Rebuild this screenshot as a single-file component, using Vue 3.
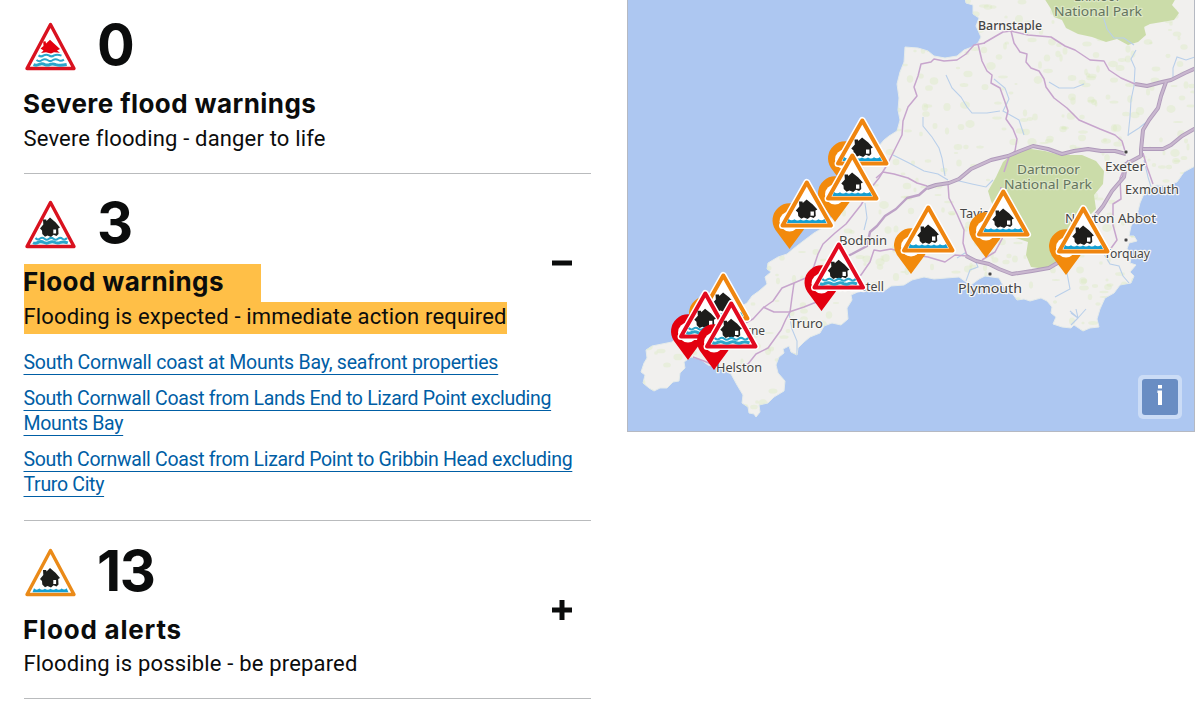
<script setup>
const sections = [
  { id: 'severe', count: '0', title: 'Severe flood warnings', text: 'Severe flooding - danger to life', icon: 'severe', toggle: '', links: [] },
  {
    id: 'warning', count: '3', title: 'Flood warnings', text: 'Flooding is expected - immediate action required', icon: 'warning', toggle: 'minus', marked: true,
    links: [
      ['South Cornwall coast at Mounts Bay, seafront properties'],
      ['South Cornwall Coast from Lands End to Lizard Point excluding', 'Mounts Bay'],
      ['South Cornwall Coast from Lizard Point to Gribbin Head excluding', 'Truro City'],
    ],
  },
  { id: 'alert', count: '13', title: 'Flood alerts', text: 'Flooding is possible - be prepared', icon: 'alert', toggle: 'plus', links: [] },
]

const land =
  'M965 -2 L966 3 973 5 973 14 979 18 976 26 981 37 978 43 972 47 964 50 957 56 945 58 934 56 928 51 918 48 905 47 904 62 900 72 897 84 899 98 898 110 900 120 897 131 889 136 884 140 872 154 860 172 850 186 842 202 833 216 826 226 814 233 802 242 793 249 787 254 778 257 768 263 767 269 771 272 765 277 767 284 759 291 752 296 747 303 737 309 727 318 712 324 704 332 694 334 680 333 672 342 662 344 652 346 646 350 647 358 644 363 641 372 645 375 643 383 649 388 654 391 660 388 667 388 673 382 679 381 680 373 685 368 684 362 691 357 700 359 708 365 720 368 731 374 737 385 743 395 742 403 748 407 749 413 754 414 756 417 760 412 759 405 768 403 774 397 784 391 785 381 778 373 776 365 779 357 784 353 783 349 789 346 791 352 797 355 798 348 804 342 810 337 820 333 824 326 832 323 841 325 848 319 847 308 852 300 851 295 860 291 872 291 884 291 891 286 904 285 912 280 924 277 934 279 946 278 959 277 966 282 971 285 979 279 985 276 999 278 1004 287 1012 293 1017 300 1024 299 1030 301 1041 298 1047 301 1052 307 1051 313 1056 317 1053 324 1062 327 1071 328 1074 325 1083 331 1090 328 1099 327 1097 319 1100 309 1105 298 1114 293 1120 285 1131 283 1134 276 1130 272 1136 265 1130 263 1132 254 1127 249 1129 243 1137 241 1134 236 1129 236 1131 226 1137 215 1140 203 1143 196 1150 188 1157 185 1166 186 1177 182 1184 172 1195 166 L1196 -2Z'

const parks = [
  'M1044 -2 L1051 9 1054 17 1062 20 1066 28 1078 34 1092 37 1106 42 1117 39 1128 45 1138 42 1146 35 1144 27 1150 24 1162 22 1174 20 1179 13 1172 5 1176 -2Z',
  'M1003 162 L1012 154 1024 148 1045 151 1060 155 1082 155 1096 161 1104 171 1103 184 1094 195 1096 209 1086 219 1088 233 1074 248 1064 263 1046 269 1031 267 1026 255 1028 242 1010 236 998 217 991 201 988 191 996 177Z',
]

const roads = [
  'M985 43 L974 45 966 54 957 60 944 61 934 59 931 62 921 64 918 76 914 87 917 96 908 107 903 121 902 135 895 149 887 165 879 178 871 188 861 205 846 224 835 233 823 244 818 254 814 266 811 273',
  'M978 44 L982 61 987 71 992 75 991 83 1000 88 1005 102 1008 111 1006 119 1013 129 1017 139 1015 151 1009 157 1004 172',
  'M984 43 L996 36 1003 32 1011 31 1028 35 1051 37 1065 46 1075 50 1090 60 1104 61 1109 70 1121 78 1135 84',
  'M1011 31 L1014 43 1020 52 1027 54 1026 62 1031 68 1039 71 1044 79 1046 87 1054 98 1067 108 1079 120 1100 129 1115 135 1122 141 1125 151',
  'M876 178 L883 172 894 174 908 178 917 183 927 186',
  'M948 184 L949 198 957 214 964 230 963 243 967 256',
  'M967 256 L955 255 945 262 928 257 909 254 891 249 880 251 874 250 870 262 861 275 846 282',
  'M838 271 L824 275 808 277 794 283 782 288 773 301 763 308 753 319 742 325',
  'M794 283 L792 297 790 312 786 319 781 330 768 348 756 354 748 364 736 369 718 367 704 361 693 357',
  'M763 307 L774 312 789 312 804 307 814 303 827 299',
  'M1128 160 L1120 178 1121 199 1113 204 1113 225 1117 240 1109 251',
  'M1143 153 L1147 167 1153 184',
  'M982 260 L995 252 1002 239 1007 221 999 207 1001 187',
]

const thickRoads = [
  'M1135 84 L1147 86 1162 82 1171 80 1185 73 1196 68',
  'M1166 82 L1161 96 1158 108 1149 120 1143 130 1141 150 1141 157',
  'M1143 149 L1163 149 1171 145 1182 136 1196 128',
  'M1126 154 L1115 151 1101 151 1088 149 1074 151 1062 154 1048 149 1033 146 1020 151 1008 156 991 160 971 169 959 179 949 183 936 185 927 188',
  'M966 256 L976 261 989 264 999 269 1012 274 1032 271 1049 268 1064 259 1075 242 1090 222 1103 206 1112 191 1124 177 1126 164 1141 156',
]

const midRoads = [
  'M927 188 L919 195 907 198 896 209 885 216 877 226 870 232 867 246 852 254 838 261',
]

const rivers = [
  'M946 75 L952 88 961 97 967 107 972 113 987 113 1000 111',
  'M923 117 L923 126 932 137 939 148 942 158 945 176',
  'M1136 50 L1131 59 1135 68 1134 86 1131 100 1130 117 1128 136',
  'M1103 16 L1107 29 1114 38 1124 38 1134 45',
  'M1084 84 L1074 88 1059 88 1049 82',
  'M1128 135 L1139 128 1149 120',
  'M955 180 L972 184 986 187 993 180',
  'M994 79 L1005 88 1009 99 1003 111 1019 120 1024 135',
  'M893 155 L909 163 924 171 938 174 948 180',
  'M1077 234 L1067 254 1067 273 1070 289 1055 297',
  'M865 203 L867 218 864 230',
  'M1104 254 L1110 264 1119 266 1123 276 1129 283',
  'M966 281 L970 270 978 267 975 260 965 253 957 258',
  'M1071 325 L1078 318 1076 309 M1078 318 L1086 309 M1071 313 L1078 318 1070 311',
  'M1144 160 L1148 177 1151 187',
  'M797 355 L797 341 792 329 789 313',
  'M1195 57 L1186 60 1177 57 1173 68 1173 77',
]

let seed = 7
const rand = () => (seed = (seed * 16807) % 2147483647) / 2147483647
const patches = Array.from({ length: 900 }, () => ({
  x: Math.round(640 + rand() * 556),
  y: Math.round(rand() * 420),
  rx: 1.5 + rand() * 3.5,
  ry: 1 + rand() * 3,
}))

const labels = [
  { t: 'Barnstaple', x: 978, y: 30, w: 64, kind: 'bold' },
  { t: 'Exmoor', x: 1074, y: 1, w: 47, kind: 'park' },
  { t: 'National Park', x: 1054, y: 16, w: 88, kind: 'park' },
  { t: 'Dartmoor', x: 1017, y: 174, w: 63, kind: 'park' },
  { t: 'National Park', x: 1004, y: 189, w: 88, kind: 'park' },
  { t: 'Exeter', x: 1105, y: 171, w: 40 },
  { t: 'Exmouth', x: 1125, y: 194, w: 54 },
  { t: 'Newton Abbot', x: 1065, y: 223, w: 91 },
  { t: 'Torquay', x: 1104, y: 258, w: 46 },
  { t: 'Plymouth', x: 958, y: 293, w: 64 },
  { t: 'Tavistock', x: 960, y: 218, w: 54 },
  { t: 'Bodmin', x: 839, y: 245, w: 48 },
  { t: 'St Austell', x: 830, y: 291, w: 54 },
  { t: 'Camborne', x: 706, y: 335, w: 59 },
  { t: 'Truro', x: 790, y: 328, w: 33 },
  { t: 'Helston', x: 716, y: 372, w: 46 },
]

const towns = [[1126, 152], [1126, 240], [990, 274]]

const markers = [
  { x: 845, y: 187, kind: 'alert' },
  { x: 835, y: 222, kind: 'alert' },
  { x: 789.5, y: 249, kind: 'alert' },
  { x: 986, y: 258, kind: 'alert' },
  { x: 911, y: 274, kind: 'alert' },
  { x: 1066, y: 275, kind: 'alert' },
  { x: 821.5, y: 311, kind: 'warning' },
  { x: 706, y: 342, kind: 'alert' },
  { x: 688, y: 360, kind: 'warning' },
  { x: 714, y: 370, kind: 'warning' },
]
</script>

<template>
  <div class="page">
    <svg class="defs" width="0" height="0" aria-hidden="true">
      <defs>
        <path id="house" d="M26 15.5 L30 19 31.5 20.3 36 25.5 34.2 26.5 34.5 32 32.5 34 29.5 32.8 27 35 23.5 33.5 21 34.7 18.3 32 18 28.5 16 26.5 19.3 22.5 19 17.5 22.2 17.5 22.5 19Z" />
        <path id="wave" d="M0 0 q2.2 2.6 4.6 .5 q2.2 -1.6 4.4 .3 q2.2 1.9 4.5 0 q2.2 -1.8 4.5 0 q2.2 1.9 4.5 0 q2.2 -1.8 4.5 0 q2.2 1.9 4.5 -.8" />
        <symbol id="severe" viewBox="0 0 53 49">
          <path class="tri red-line" d="M26.5 2.5 L50 46.5 H3Z" />
          <path class="red-fill" d="M26 17.8 L30 21.5 36 27 33 28.5 36 30.8 30 30.2 27 31.5 22 30.2 17 31 19.5 28.4 16.5 26.5 19.5 24 19.2 19.5 21.6 19.3 22 21.5Z" />
          <g class="water">
            <path d="M14.5 33.4 q2.6 2 5.2 0 q2.6 -1.5 5.2 0 q2.6 2 5.2 0 q3 -1.5 7.4 .2" />
            <path d="M12.5 38 q2.8 2.4 5.6 0 q2.7 -1.7 5.4 0 q2.7 2.2 5.4 0 q2.7 -1.7 5.4 0 q2.8 1.8 5.6 -.4" />
            <path class="deep" d="M9.5 42.7 q3 1.2 6 -.4 q2.7 -1 5.4 .3 q2.7 1.1 5.4 -.2 q2.7 -1 5.4 .2 q4 1.2 11 -.1" />
          </g>
        </symbol>
        <symbol id="warning" viewBox="0 0 53 49">
          <path class="tri red-line" d="M26.5 2.5 L50 46.5 H3Z" />
          <g transform="translate(0 2)">
            <use href="#house" class="dark" />
            <path class="door" d="M29.3 27.5 h2.8 v4 h-2.8z" />
          </g>
          <g class="water">
            <use href="#wave" x="11.5" y="38" />
            <path class="deep" d="M9 42.7 q2.6 1.4 5.4 -.5 q2.8 -1.3 5.6 .3 q2.8 1.4 5.6 -.2 q2.8 -1.3 5.6 .2 q2.8 1.3 5.6 -.2 q2.5 -1 7 .6" />
          </g>
        </symbol>
        <symbol id="alert" viewBox="0 0 53 49">
          <path class="tri orange-line" d="M26.5 2.5 L50 46.5 H3Z" />
          <g transform="translate(0 4.5)">
            <use href="#house" class="dark" />
            <path class="door" d="M29.3 27.5 h2.8 v4 h-2.8z" />
          </g>
          <path class="blue-fill" d="M8.5 44.3 L10 40.3 q2.6 2.6 5.4 .2 q2.8 2.4 5.5 .2 q2.8 2.3 5.6 0 q2.8 2.3 5.6 0 q2.8 2.3 5.5 -.2 q2.8 2.2 5 -.2 L44.5 44.3Z" />
        </symbol>
        <clipPath id="land-clip"><path :d="land" /></clipPath>
      </defs>
    </svg>

    <main class="list">
      <section v-for="s in sections" :key="s.id" class="section" :class="s.id">
        <div class="head">
          <div class="summary">
            <div class="count-row">
              <svg class="sign" width="53" height="49"><use :href="'#' + s.icon" /></svg>
              <span class="count">{{ s.count }}</span>
            </div>
            <h2 :class="{ marked: s.marked }">{{ s.title }}</h2>
            <p :class="{ marked: s.marked }">{{ s.text }}</p>
          </div>
          <svg v-if="s.toggle" class="toggle" width="20" height="20" viewBox="0 0 20 20">
            <path d="M0 7.5h20v5H0z" />
            <path v-if="s.toggle === 'plus'" d="M7.5 0h5v20h-5z" />
          </svg>
        </div>
        <ul v-if="s.links.length" class="links">
          <li v-for="(link, i) in s.links" :key="i">
            <a><span v-for="line in link" :key="line">{{ line }}</span></a>
          </li>
        </ul>
      </section>
    </main>

    <aside class="map">
      <svg width="568" height="432" viewBox="627 0 568 432">
        <path class="land" :d="land" />
        <g clip-path="url(#land-clip)">
          <ellipse v-for="(p, i) in patches" :key="i" class="patch" :cx="p.x" :cy="p.y" :rx="p.rx" :ry="p.ry" />
          <path v-for="p in parks" :key="p" class="park" :d="p" />
          <path v-for="r in rivers" :key="r" class="river" :d="r" />
        </g>
        <path v-for="r in roads" :key="r" class="road" :d="r" />
        <path v-for="r in midRoads" :key="r" class="road mid" :d="r" />
        <path v-for="r in thickRoads" :key="r" class="road-edge" :d="r" />
        <path v-for="r in thickRoads" :key="'c' + r" class="road-core" :d="r" />
        <circle v-for="t in towns" :key="t[0] + '-' + t[1]" class="town" :cx="t[0]" :cy="t[1]" r="2" />
        <text v-for="(l, i) in labels" :key="i" :class="['label', l.kind]" :x="l.x" :y="l.y" :textLength="l.w" lengthAdjust="spacingAndGlyphs">{{ l.t }}</text>
        <g v-for="(m, i) in markers" :key="'m' + i" :class="['marker', m.kind]" :transform="`translate(${m.x} ${m.y})`">
          <path class="pin" d="M0 0 L-14 -19 A17 17 0 1 1 14 -19Z" />
          <circle class="hole" cx="0" cy="-27.5" r="10" />
          <path class="halo" d="M17.3 -66.5 L41.5 -23.5 H-7Z" />
          <path class="face" d="M17.3 -66.5 L41.5 -23.5 H-7Z" />
          <g :transform="m.kind === 'alert' ? 'translate(0 2.5)' : 'translate(0 .8)'">
            <use href="#house" class="dark" transform="translate(-11 -67.5) scale(1.08 1)" />
            <path class="door" d="M21 -40h3.4v4.2h-3.4z" />
          </g>
          <path v-if="m.kind === 'alert'" class="blue-fill" d="M-2.5 -26 L-1 -30 q3 2.6 6 .2 q3 2.4 6 .2 q3 2.3 6 0 q3 2.3 6 0 q3 2.3 6 -.2 q3 2.2 6 -.2 L37 -26Z" />
          <g v-else class="water">
            <use href="#wave" transform="translate(.8 -32) scale(1.06 1)" />
            <path class="deep" d="M-1.5 -27.3 q3 1.2 5.5 -.4 q3 -1.3 6 .3 q3 1.4 6 -.2 q3 -1.3 6 .2 q3 1.3 6 -.2 q3 -1 7.5 .5" />
          </g>
        </g>
      </svg>
      <button class="info" type="button">
        <svg width="36" height="36" viewBox="0 0 36 36"><path d="M16 6h4v3.6h-4zM15.4 11.4H20V26h-4V14h-.6z" /></svg>
      </button>
    </aside>
  </div>
</template>

<style>
body { background: #fff; overflow: hidden; }
</style>

<style scoped>
.page { width: 1200px; height: 708px; overflow: hidden; display: flex; align-items: flex-start; gap: 36px; padding-left: 24px; box-sizing: border-box; font-family: Inter, "Liberation Sans", sans-serif; color: #0b0c0c; }
.defs { position: absolute; }
.list { width: 567px; margin-top: -4px; flex: none; }
.section { height: 178px; box-sizing: border-box; border-bottom: 1px solid #b9bbbd; }
.section.warning { height: 347px; }
.head { display: flex; justify-content: space-between; align-items: center; height: 177px; padding-right: 19px; }
.summary { height: 177px; display: flex; flex-direction: column; align-items: flex-start; }
.count-row { height: 90px; box-sizing: border-box; padding-top: 26px; display: flex; align-items: flex-start; gap: 20px; }
.alert .count-row { height: 91px; padding-top: 27px; }
.sign { display: block; }
.count { font-size: 56px; font-weight: 700; line-height: 50px; margin-top: -2px; letter-spacing: -1.5px; }
h2 { margin: 0; font-size: 26px; line-height: 35px; padding-bottom: 3px; font-weight: 700; letter-spacing: .42px; text-indent: -1px; white-space: nowrap; }
p { margin: 0; font-family: Roboto, sans-serif; font-size: 22px; line-height: 29px; padding-bottom: 3px; letter-spacing: .17px; text-indent: -.5px; white-space: nowrap; }
.alert h2 { letter-spacing: .8px; padding-bottom: 2px; }
.marked { background: #ffbf47; }
h2.marked { width: 237px; }
p.marked { width: 483px; }
.toggle { display: block; fill: #0b0c0c; }
.links { list-style: none; margin: 0; padding: 0; }
li + li { margin-top: 12px; }
a { color: #005ea5; font-family: Roboto, sans-serif; font-size: 19.5px; line-height: 24.4px; letter-spacing: -.31px; }
a span { display: block; width: max-content; margin-left: -.5px; text-decoration: underline; text-decoration-thickness: 1.3px; text-underline-offset: 5px; text-decoration-skip-ink: none; }
li:first-child a { letter-spacing: -.23px; }
.tri { fill: #fff; stroke-width: 3.4; stroke-linejoin: round; }
.red-line { stroke: #d9121f; }
.orange-line { stroke: #ea8a18; }
.red-fill { fill: #e3000f; }
.dark { fill: #1d1d1b; }
.door { fill: #fff; }
.water { fill: none; stroke: #2ba6cb; stroke-width: 2; }
.deep { stroke-width: 3; }
.blue-fill { fill: #159fd2; }
.map { position: relative; width: 568px; height: 432px; background: #adc7f1; overflow: hidden; flex: none; }
.map::after { content: ""; position: absolute; inset: 0; border: 1px solid #b5b9c2; border-top: 0; pointer-events: none; }
.map > svg { display: block; }
.land { fill: #f1f0ee; stroke: #e5ebea; stroke-width: 1; }
.patch { fill: #d8e8b6; opacity: .32; }
.park { fill: #cbdca9; }
.river { fill: none; stroke: #b9cfea; stroke-width: 1.1; }
.road { fill: none; stroke: #c7a5cd; stroke-width: 1.5; stroke-linejoin: round; }
.road.mid { stroke: #bda2c6; stroke-width: 2.4; }
.road-edge { fill: none; stroke: #b09bbb; stroke-width: 4; stroke-linejoin: round; }
.road-core { fill: none; stroke: #c9b7cf; stroke-width: 2.2; stroke-linejoin: round; }
.town { fill: #444; stroke: #fff; stroke-width: .6; }
.label { font-family: "Noto Sans", sans-serif; font-size: 13px; fill: #454545; stroke: #f7f6f4; stroke-width: 2.4; paint-order: stroke; stroke-linejoin: round; }
.label.bold { font-weight: 500; }
.label.park { fill: #64745f; stroke: #dce7c5; }
.pin { fill: #f28a0c; }
.warning .pin { fill: #e3000f; }
.hole { fill: #fff; }
.halo { fill: #fff; stroke: #fff; stroke-width: 7; stroke-linejoin: round; }
.face { fill: #fff; stroke: #ef850f; stroke-width: 4; stroke-linejoin: round; }
.warning .face { stroke: #e20a20; }
.info { position: absolute; right: 13px; bottom: 13px; width: 44px; height: 44px; padding: 4px; border: 0; border-radius: 5px; background: #cbdcf6; }
.info svg { display: block; background: #698dc3; border-radius: 3px; fill: #fff; }
</style>
